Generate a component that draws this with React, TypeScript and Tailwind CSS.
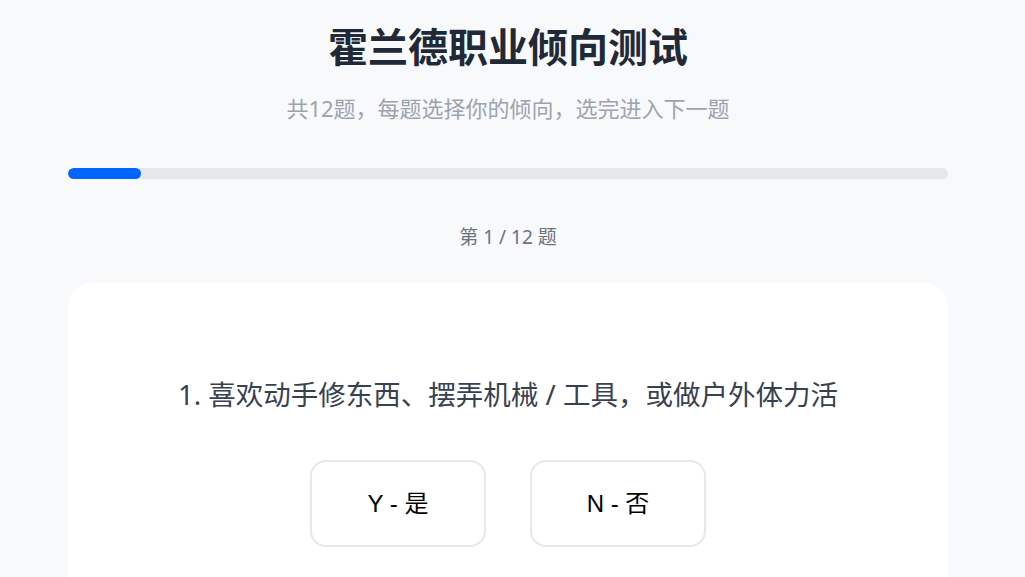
import React from "react";

const total = 12;
const current = 1;

function AnswerButton({ label }: { label: string }) {
  return (
    <button
      type="button"
      className="w-[176px] h-[87px] rounded-2xl border-2 border-[#e5e7eb] bg-white text-[24px] text-black"
      style={{ fontFamily: '"Liberation Sans", "Noto Sans CJK SC", sans-serif' }}
    >
      {label}
    </button>
  );
}

export default function App() {
  return (
    <div
      className="min-h-screen bg-[#f8f9fb] pr-[9px]"
      style={{ fontFamily: '"Noto Sans", "Noto Sans CJK SC", sans-serif' }}
    >
      <div className="w-[880px] mx-auto pt-[19px] pb-10">
        <h1 className="text-center text-[40px] font-bold text-[#1f2937] leading-[56px]">
          霍兰德职业倾向测试
        </h1>
        <p className="text-center text-[22px] text-[#9ca3af] mt-[17px] leading-[32px]">
          共12题，每题选择你的倾向，选完进入下一题
        </p>

        <div className="mt-[44px] h-[11px] w-full rounded-full bg-[#e5e7eb] overflow-hidden">
          <div
            className="h-full rounded-full bg-[#0066ff]"
            style={{ width: `${(current / total) * 100}%` }}
          />
        </div>

        <p className="text-center text-[19px] text-[#6b7280] mt-[44px] leading-[28px]">
          第 {current} / {total} 题
        </p>

        <div className="mt-[32px] bg-white rounded-3xl px-10 pt-[92px] pb-16">
          <p className="text-center text-[27.5px] text-[#374151] leading-[40px]">
            1. 喜欢动手修东西、摆弄机械 / 工具，或做户外体力活
          </p>
          <div className="flex justify-center gap-[44px] mt-[45px]">
            <AnswerButton label="Y - 是" />
            <AnswerButton label="N - 否" />
          </div>
        </div>
      </div>
    </div>
  );
}
